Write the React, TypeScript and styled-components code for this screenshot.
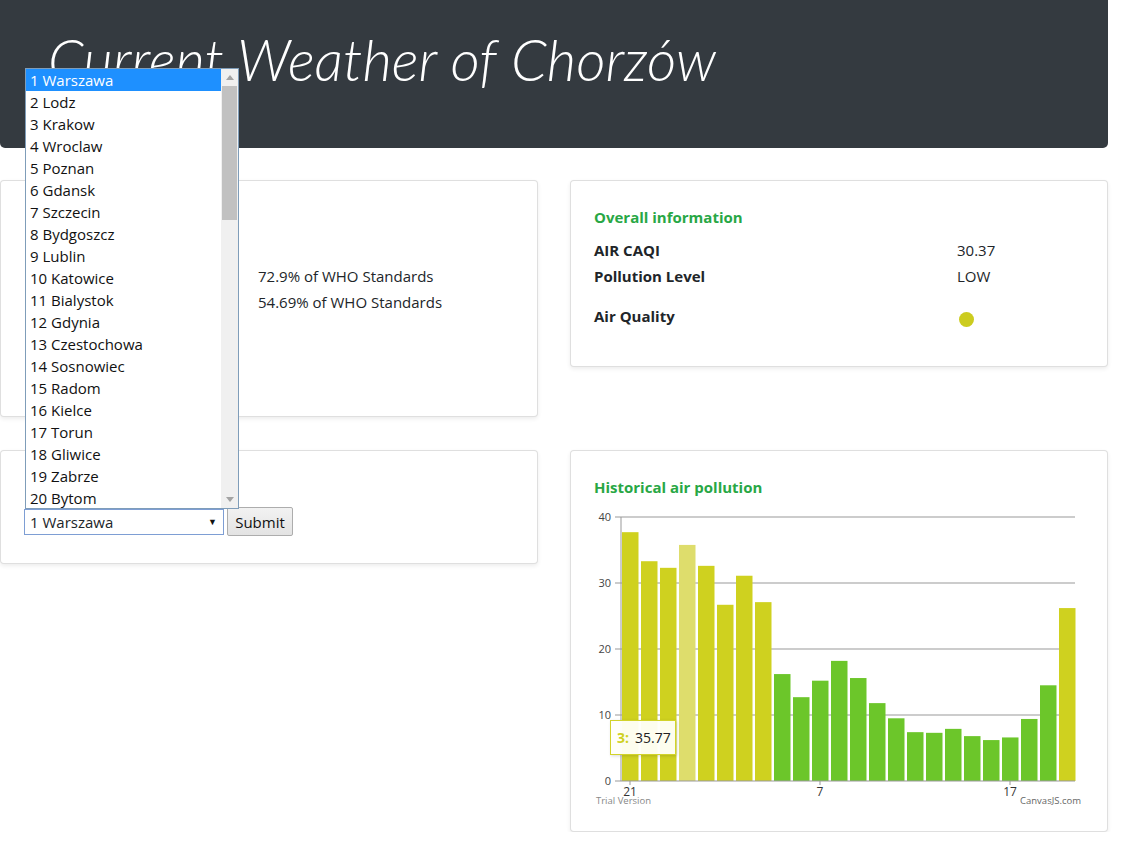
import React from "react";
import styled, { createGlobalStyle } from "styled-components";

const GlobalStyle = createGlobalStyle`
  body {
    margin: 0;
    background: #fff;
    color: #212529;
    font-family: "Open Sans", "Liberation Sans", sans-serif;
    font-size: 15px;
  }
  * { box-sizing: border-box; }
`;

const cities = [
  "Warszawa", "Lodz", "Krakow", "Wroclaw", "Poznan", "Gdansk", "Szczecin",
  "Bydgoszcz", "Lublin", "Katowice", "Bialystok", "Gdynia", "Czestochowa",
  "Sosnowiec", "Radom", "Kielce", "Torun", "Gliwice", "Zabrze", "Bytom",
];

const history = [
  37.7, 33.3, 32.3, 35.77, 32.6, 26.7, 31.1, 27.1, 16.2, 12.7, 15.2, 18.2,
  15.6, 11.8, 9.5, 7.4, 7.3, 7.9, 6.8, 6.2, 6.6, 9.4, 14.5, 26.2,
];

const Page = styled.div`
  position: relative;
  width: 1108px;
`;

const Jumbotron = styled.header`
  height: 148px;
  padding: 25px 48px;
  background: #343a40;
  border-radius: 0 0 5px 5px;
`;

const Title = styled.h1`
  margin: 0;
  color: #fff;
  font-family: "Lato", "Open Sans", sans-serif;
  font-style: italic;
  font-weight: 300;
  font-size: 57px;
  line-height: 1.2;
`;

const Board = styled.main`
  display: grid;
  grid-template-columns: 538px 538px;
  column-gap: 32px;
  row-gap: 33px;
  align-items: start;
  margin-top: 32px;
`;

const Card = styled.section`
  background: #fff;
  border: 1px solid rgba(0, 0, 0, 0.125);
  border-radius: 4px;
  box-shadow: 0 2px 4px rgba(0, 0, 0, 0.075);
  padding: 25px 23px 23px;
`;

const CardTitle = styled.h5`
  margin: 0 0 9px;
  min-height: 22px;
  color: #28a745;
  font-size: 15px;
  font-weight: 700;
  line-height: 22px;
`;

const InfoRow = styled.div<{ $split: number; $spaced?: boolean }>`
  display: grid;
  grid-template-columns: ${(p) => p.$split}px 1fr;
  line-height: 26px;
  margin-top: ${(p) => (p.$spaced ? "14px" : "0")};
  min-height: ${(p) => (p.$spaced ? "40px" : "26px")};
`;

const Label = styled.span`
  font-weight: 700;
`;

const Value = styled.span``;

const Dot = styled.span<{ $color: string }>`
  display: block;
  width: 15px;
  height: 15px;
  margin: 9px 0 0 2px;
  border-radius: 50%;
  background: ${(p) => p.$color};
`;

const FormRow = styled.form`
  display: flex;
  align-items: center;
  gap: 3px;
  margin: 2px 0 4px;
`;

const SelectBox = styled.div`
  display: flex;
  align-items: center;
  justify-content: space-between;
  width: 200px;
  height: 26px;
  padding: 0 6px 0 5px;
  border: 1px solid #7e9ed4;
  background: #fff;
  line-height: 24px;
`;

const SelectArrow = styled.span`
  font-size: 9px;
  color: #111;
`;

const SubmitButton = styled.button`
  width: 66px;
  height: 29px;
  padding: 0;
  font-family: inherit;
  font-size: 15px;
  color: #111;
  border: 1px solid #adadad;
  border-radius: 2px;
  background: linear-gradient(#f2f2f2, #e3e3e3);
`;

const ChartWrap = styled.div`
  position: relative;
  padding-top: 2px;
  height: 301px;
`;

const Tooltip = styled.div`
  position: absolute;
  left: 16px;
  top: 213px;
  width: 66px;
  height: 35px;
  display: flex;
  align-items: center;
  gap: 6px;
  padding-left: 6px;
  background: rgba(255, 255, 250, 0.95);
  border: 1px solid #d2d32a;
  box-shadow: 1px 1px 3px rgba(0, 0, 0, 0.15);
  font-size: 14px;
  color: #222;
`;

const TooltipKey = styled.span`
  color: #cfd11f;
  font-weight: 700;
`;

const DropList = styled.div`
  position: absolute;
  left: 25px;
  top: 68px;
  width: 214px;
  height: 441px;
  display: flex;
  background: #fff;
  border: 1px solid #7f9db9;
`;

const Options = styled.ul`
  flex: 1;
  margin: 0;
  padding: 0;
  list-style: none;
`;

const Option = styled.li<{ $active?: boolean }>`
  height: 22px;
  padding-left: 4px;
  line-height: 22px;
  white-space: nowrap;
  color: ${(p) => (p.$active ? "#fff" : "#111")};
  background: ${(p) => (p.$active ? "#1e90ff" : "transparent")};
`;

const Scrollbar = styled.div`
  width: 17px;
  display: flex;
  flex-direction: column;
  background: #f0f0f0;
`;

const ScrollButton = styled.div`
  height: 17px;
  display: flex;
  align-items: center;
  justify-content: center;
`;

const Track = styled.div`
  flex: 1;
`;

const Thumb = styled.div`
  height: 134px;
  margin: 0 1px;
  background: #c1c1c1;
`;

const Arrow = ({ down }: { down?: boolean }) => (
  <svg width="8" height="5" viewBox="0 0 8 5">
    <polygon points={down ? "0,0 8,0 4,5" : "0,5 8,5 4,0"} fill="#a3a3a3" />
  </svg>
);

const BarChart = () => {
  const baseY = 272;
  const unit = 6.6;
  const grid = [40, 30, 20, 10, 0];
  const xLabels: [number, string][] = [
    [0, "21"],
    [10, "7"],
    [20, "17"],
  ];
  return (
    <svg width="490" height="299" viewBox="0 0 490 299">
      {grid.map((g) => {
        const y = baseY - g * unit;
        return (
          <g key={g}>
            <line x1="21" x2="27" y1={y} y2={y} stroke="#999" />
            {g > 0 && <line x1="27" x2="481" y1={y} y2={y} stroke="#9a9a9a" strokeWidth="1.2" />}
            <text x="17" y={y + 4} textAnchor="end" fontSize="11" fill="#444" fontFamily="Open Sans, sans-serif">
              {g}
            </text>
          </g>
        );
      })}
      {history.map((v, i) => {
        const color = i === 3 ? "#dedd6c" : v > 25 ? "#cfd11f" : "#6cc62a";
        return (
          <rect key={i} x={28 + i * 19} y={baseY - v * unit} width="16.5" height={v * unit} fill={color} />
        );
      })}
      <line x1="27" x2="27" y1="8" y2={baseY} stroke="#999" />
      <line x1="27" x2="481" y1={baseY} y2={baseY} stroke="#999" strokeWidth="1.2" />
      {xLabels.map(([i, t]) => (
        <g key={t}>
          <line x1={36 + i * 19} x2={36 + i * 19} y1={baseY} y2={baseY + 4} stroke="#999" />
          <text x={36 + i * 19} y={baseY + 15} textAnchor="middle" fontSize="12" fill="#333" fontFamily="Open Sans, sans-serif">
            {t}
          </text>
        </g>
      ))}
      <text x="2" y="295" fontSize="9.5" fill="#888" fontFamily="Open Sans, sans-serif">
        Trial Version
      </text>
      <text x="487" y="295" textAnchor="end" fontSize="9.5" fill="#666" fontFamily="Open Sans, sans-serif">
        CanvasJS.com
      </text>
    </svg>
  );
};

const App: React.FC = () => {
  return (
    <Page>
      <GlobalStyle />
      <Jumbotron>
        <Title>Current Weather of Chorzów</Title>
      </Jumbotron>
      <Board>
        <Card>
          {/* label side of this card sits under the open city list */}
          <CardTitle />
          <InfoRow $split={234} />
          <InfoRow $split={234}>
            <Label />
            <Value>72.9% of WHO Standards</Value>
          </InfoRow>
          <InfoRow $split={234}>
            <Label />
            <Value>54.69% of WHO Standards</Value>
          </InfoRow>
          <InfoRow $split={234} />
          <InfoRow $split={234} />
          <InfoRow $split={234} />
        </Card>
        <Card>
          <CardTitle>Overall information</CardTitle>
          <InfoRow $split={363}>
            <Label>AIR CAQI</Label>
            <Value>30.37</Value>
          </InfoRow>
          <InfoRow $split={363}>
            <Label>Pollution Level</Label>
            <Value>LOW</Value>
          </InfoRow>
          <InfoRow $split={363} $spaced>
            <Label>Air Quality</Label>
            <Value>
              <Dot $color="#cccc1f" />
            </Value>
          </InfoRow>
        </Card>
        <Card>
          <CardTitle />
          <FormRow onSubmit={(e) => e.preventDefault()}>
            <SelectBox>
              <span>1 Warszawa</span>
              <SelectArrow>▼</SelectArrow>
            </SelectBox>
            <SubmitButton type="submit">Submit</SubmitButton>
          </FormRow>
        </Card>
        <Card>
          <CardTitle>Historical air pollution</CardTitle>
          <ChartWrap>
            <BarChart />
            <Tooltip>
              <TooltipKey>3:</TooltipKey>
              <span>35.77</span>
            </Tooltip>
          </ChartWrap>
        </Card>
      </Board>
      <DropList>
        <Options>
          {cities.map((c, i) => (
            <Option key={c} $active={i === 0}>
              {i + 1} {c}
            </Option>
          ))}
        </Options>
        <Scrollbar>
          <ScrollButton>
            <Arrow />
          </ScrollButton>
          <Track>
            <Thumb />
          </Track>
          <ScrollButton>
            <Arrow down />
          </ScrollButton>
        </Scrollbar>
      </DropList>
    </Page>
  );
};

export default App;
